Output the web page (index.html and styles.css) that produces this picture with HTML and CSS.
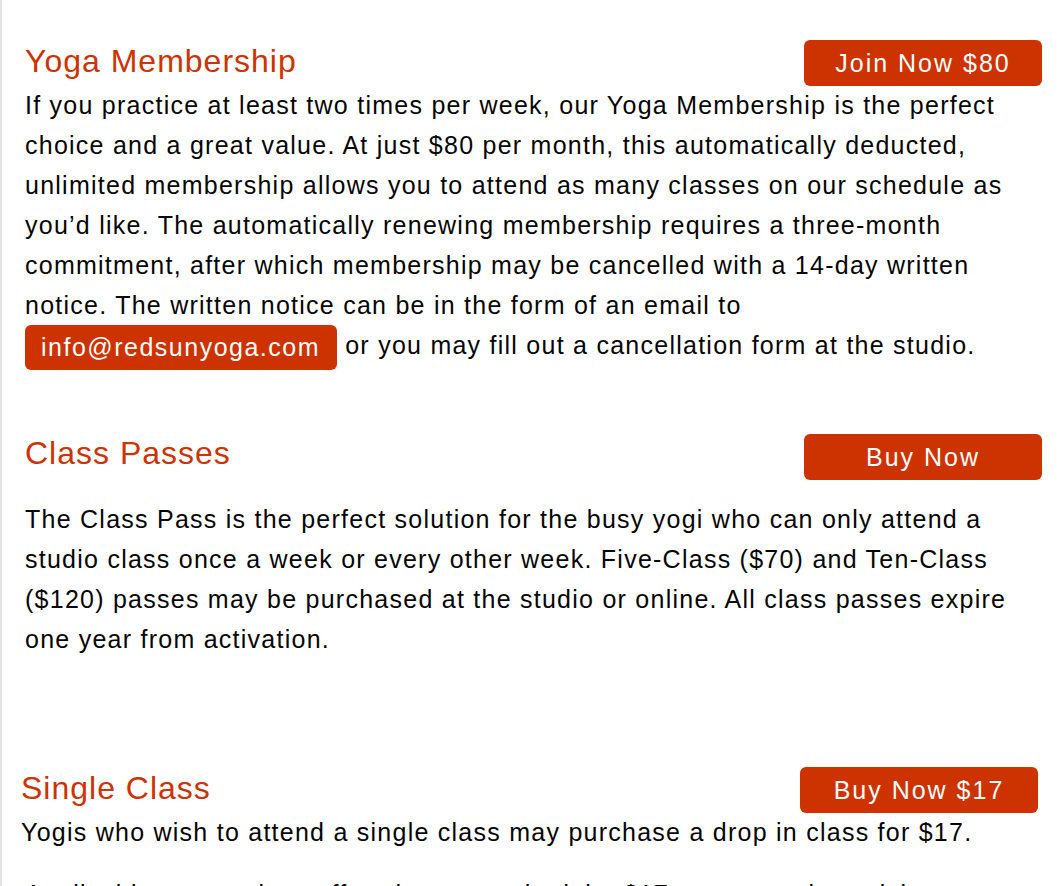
FILE: index.html
```html
<!DOCTYPE html>
<html lang="en">
<head>
<meta charset="utf-8">
<title>Pricing - Red Sun Yoga</title>
<link rel="stylesheet" href="styles.css">
</head>
<body>
<main class="page">
  <section class="offer offer-membership">
    <div class="offer-head">
      <h2 class="offer-title">Yoga Membership</h2>
      <a class="btn btn-buy" href="#">Join Now $80</a>
    </div>
    <p class="offer-text">If you practice at least two times per week, our Yoga Membership is the perfect choice and a great value. At just $80 per month, this automatically deducted, unlimited membership allows you to attend as many classes on our schedule as you’d like. The automatically renewing membership requires a three-month commitment, after which membership may be cancelled with a 14-day written notice. The written notice can be in the form of an email to <a class="btn btn-mail" href="#">info@redsunyoga.com</a> or you may fill out a cancellation form at the studio.</p>
  </section>

  <section class="offer offer-passes">
    <div class="offer-head">
      <h2 class="offer-title offer-title-raised">Class Passes</h2>
      <a class="btn btn-buy" href="#">Buy Now</a>
    </div>
    <p class="offer-text offer-text-spaced">The Class Pass is the perfect solution for the busy yogi who can only attend a studio class once a week or every other week. Five-Class ($70) and Ten-Class ($120) passes may be purchased at the studio or online. All class passes expire one year from activation.</p>
  </section>

  <section class="offer offer-single">
    <div class="offer-head">
      <h2 class="offer-title">Single Class</h2>
      <a class="btn btn-buy" href="#">Buy Now $17</a>
    </div>
    <p class="offer-text">Yogis who wish to attend a single class may purchase a drop in class for $17.</p>
  </section>

  <p class="offer-text offer-text-next">Applicable to any class offered on our schedule. $17 + tax per class visit.</p>
</main>
</body>
</html>
```

FILE: styles.css
```css
html, body {
  margin: 0;
  padding: 0;
  background: #ffffff;
}

body {
  font-family: "Liberation Sans", Arial, sans-serif;
  color: #050505;
  overflow: hidden;
  height: 886px;
}

.page {
  border-left: 2px solid #e2e2e2;
  padding: 41px 22px 0 23px;
  min-height: 886px;
  box-sizing: border-box;
}

.offer-head {
  display: flex;
  justify-content: space-between;
  align-items: center;
  height: 44px;
}

.offer-title {
  margin: 0;
  padding-bottom: 5px;
  font-weight: normal;
  font-size: 32px;
  letter-spacing: 1px;
  color: #cc3300;
  line-height: 40px;
}

.offer-title-raised {
  padding-bottom: 9px;
}

.btn {
  background: #cc3300;
  color: #ffffff;
  text-decoration: none;
  border-radius: 6px;
  font-size: 25px;
}

.btn-buy {
  display: flex;
  flex: none;
  align-items: center;
  justify-content: center;
  width: 238px;
  height: 46px;
  letter-spacing: 2px;
}

.btn-mail {
  display: inline-block;
  padding: 0 17px 0 16px;
  line-height: 45px;
  vertical-align: middle;
  letter-spacing: 1.5px;
}

.offer-text {
  margin: 0;
  font-size: 25px;
  letter-spacing: 1.25px;
  line-height: 40px;
}

.offer-text-spaced {
  margin-top: 20px;
}

.offer-passes {
  margin-top: 65px;
}

.offer-single {
  margin-top: 109px;
  margin-left: -4px;
  margin-right: 4px;
}

.offer-text-next {
  margin-top: 22px;
}
```
